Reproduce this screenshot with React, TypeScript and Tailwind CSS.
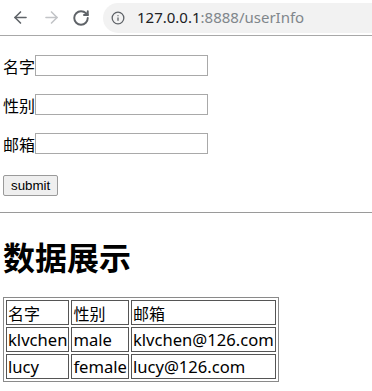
import React from "react";
import { ArrowLeft, ArrowRight, RotateCw, Info } from "lucide-react";

const USERS = [
  { name: "klvchen", sex: "male", email: "klvchen@126.com" },
  { name: "lucy", sex: "female", email: "lucy@126.com" },
];

const FIELDS = ["名字", "性别", "邮箱"];

const Toolbar = () => (
  <div className="flex h-[36px] items-center border-b border-[#a8a8a8] bg-white">
    <div className="flex w-[103px] items-center">
      <ArrowLeft className="ml-[11px] size-[19px] text-[#5f6368]" strokeWidth={2} />
      <ArrowRight className="ml-[12px] size-[19px] text-[#c2c4c7]" strokeWidth={2} />
      <RotateCw className="ml-[11px] size-[18px] text-[#5f6368]" strokeWidth={2.6} />
    </div>
    <div className="flex h-[30px] flex-1 items-center rounded-l-full bg-[#f2f2f2] pl-[8px]">
      <Info className="size-[14px] text-[#5f6368]" strokeWidth={2.2} />
      <span className="ml-[12px] font-['Noto_Sans',sans-serif] text-[15px] leading-none text-[#202124]">
        127.0.0.1<span className="text-[#80868b]">:8888/userInfo</span>
      </span>
    </div>
  </div>
);

const cell = "h-[25px] border border-[#555] px-[1px] pt-[1px] leading-none";

export default function App() {
  return (
    <div className="h-[391px] w-[372px] overflow-hidden bg-white font-['Noto_Sans','Noto_Sans_CJK_SC',sans-serif] text-[16px] text-black">
      <Toolbar />
      <div className="px-[3px]">
        <div className="mt-[19px] flex flex-col gap-[18px]">
          {FIELDS.map((label) => (
            <div key={label} className="flex h-[21px] items-center">
              <span className="font-['Noto_Sans_CJK_SC',sans-serif] leading-none">{label}</span>
              <input
                type="text"
                className="h-[21px] w-[173px] border border-[#a9a9a9] bg-white px-[2px] text-[13px] outline-none"
              />
            </div>
          ))}
          <div>
            <button className="h-[21px] rounded-[2px] border border-[#9a9a9a] bg-[#efefef] px-[7px] font-['Liberation_Sans',sans-serif] text-[13.33px] leading-none text-black">
              submit
            </button>
          </div>
        </div>
      </div>
      <div className="mt-[16px] border-t border-[#9a9a9a]" />
      <div className="px-[3px]">
        <h1 className="mt-[27px] font-['Noto_Sans_CJK_SC',sans-serif] text-[32px] font-bold leading-none">
          数据展示
        </h1>
        <table className="mt-[25px] border-separate border-spacing-[2px] border border-[#8a8a8a] text-[16.6px]">
          <tbody>
            <tr>
              {FIELDS.map((f) => (
                <td key={f} className={`${cell} font-['Noto_Sans_CJK_SC',sans-serif] text-[16px]`}>
                  {f}
                </td>
              ))}
            </tr>
            {USERS.map((u) => (
              <tr key={u.name}>
                <td className={cell}>{u.name}</td>
                <td className={cell}>{u.sex}</td>
                <td className={cell}>{u.email}</td>
              </tr>
            ))}
          </tbody>
        </table>
      </div>
    </div>
  );
}
